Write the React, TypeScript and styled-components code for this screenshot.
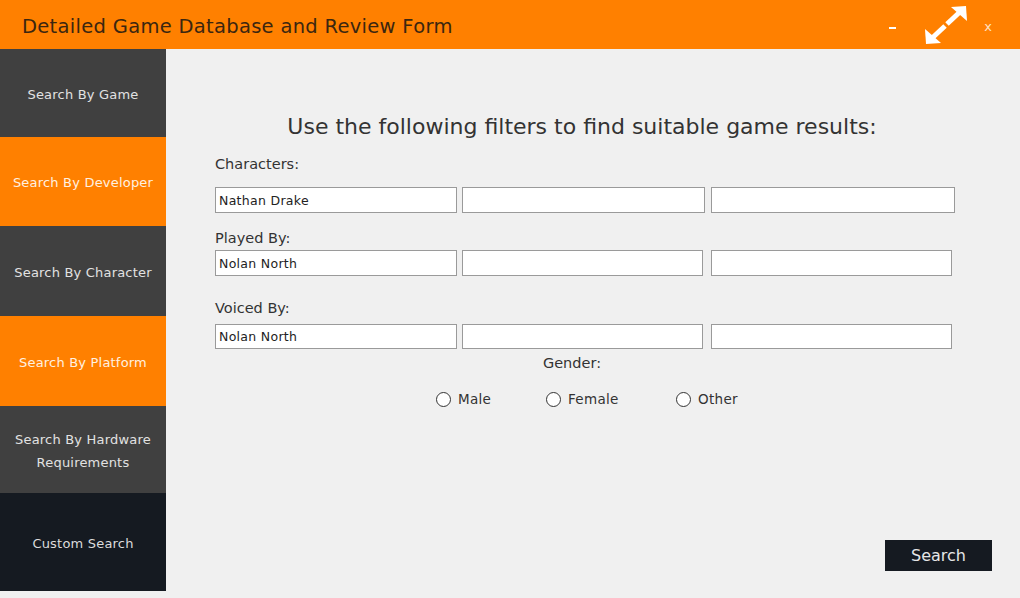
import React from 'react';
import styled, { createGlobalStyle } from 'styled-components';

const Global = createGlobalStyle`
  html, body { margin: 0; padding: 0; }
  body {
    background: #f0f0f0;
    font-family: "DejaVu Sans", "Liberation Sans", sans-serif;
  }
`;

const Window = styled.div`
  width: 1020px;
  height: 598px;
  display: flex;
  flex-direction: column;
  background: #f0f0f0;
  overflow: hidden;
`;

const TitleBar = styled.header`
  height: 49px;
  flex: none;
  background: #ff8000;
  display: flex;
  align-items: center;
  padding-left: 22px;
`;

const Title = styled.h1`
  flex: 1;
  margin: 3px 0 0 0;
  font-weight: normal;
  font-size: 19.5px;
  color: #3b2610;
  letter-spacing: 0.3px;
`;

const Controls = styled.div`
  display: flex;
  align-items: center;
  height: 100%;
`;

const Minimize = styled.span`
  width: 7px;
  height: 2px;
  background: #ffffff;
  margin-top: 6px;
  margin-right: 27px;
`;

const CloseX = styled.span`
  color: #ffe2c4;
  font-size: 13px;
  margin-left: 15px;
  margin-right: 28px;
  margin-top: 4px;
`;

const Body = styled.div`
  flex: 1;
  display: flex;
  min-height: 0;
`;

const Sidebar = styled.nav`
  width: 166px;
  flex: none;
  display: flex;
  flex-direction: column;
`;

const tones = {
  gray: { bg: '#404040', fg: '#e2e2e2' },
  orange: { bg: '#ff8000', fg: '#fff1e0' },
  navy: { bg: '#151a21', fg: '#dcdcdc' },
};

const NavItem = styled.div<{ $tone: keyof typeof tones; $h: number }>`
  height: ${(p) => p.$h}px;
  background: ${(p) => tones[p.$tone].bg};
  color: ${(p) => tones[p.$tone].fg};
  display: flex;
  align-items: center;
  justify-content: center;
  text-align: center;
  font-size: 13px;
  letter-spacing: 0.2px;
  line-height: 23px;
  padding: 2px 0 0;
  box-sizing: border-box;
  white-space: nowrap;
`;

const Content = styled.main`
  flex: 1;
  display: flex;
  flex-direction: column;
`;

const Form = styled.section`
  margin-left: 49px;
  width: 740px;
  padding-top: 64px;
  display: flex;
  flex-direction: column;
`;

const Heading = styled.h2`
  margin: 0;
  font-weight: normal;
  font-size: 22px;
  line-height: 28px;
  color: #333333;
  text-align: center;
  padding-right: 6px;
`;

const Label = styled.div<{ $mt: number; $center?: boolean }>`
  margin-top: ${(p) => p.$mt}px;
  font-size: 14.5px;
  line-height: 18px;
  color: #333333;
  text-align: ${(p) => (p.$center ? 'center' : 'left')};
  padding-right: ${(p) => (p.$center ? 26 : 0)}px;
`;

const FieldRow = styled.div<{ $mt: number }>`
  margin-top: ${(p) => p.$mt}px;
  display: flex;
`;

const Field = styled.div<{ $w: number; $h: number; $gap?: number }>`
  width: ${(p) => p.$w}px;
  height: ${(p) => p.$h}px;
  margin-left: ${(p) => p.$gap ?? 0}px;
  box-sizing: border-box;
  background: #ffffff;
  border: 1px solid #9a9a9a;
  font-size: 12.5px;
  letter-spacing: 0.3px;
  color: #222222;
  display: flex;
  align-items: center;
  padding-left: 3px;
`;

const RadioRow = styled.div`
  margin-top: 18px;
  display: grid;
  grid-template-columns: 110px 130px auto;
  padding-left: 221px;
  height: 18px;
`;

const RadioOption = styled.label`
  display: flex;
  align-items: center;
  gap: 7px;
  font-size: 13.5px;
  letter-spacing: 0.3px;
  color: #333333;
`;

const RadioCircle = styled.span`
  width: 15px;
  height: 15px;
  box-sizing: border-box;
  border-radius: 50%;
  border: 1px solid #333333;
  background: #ffffff;
`;

const Footer = styled.div`
  margin-top: auto;
  display: flex;
  justify-content: flex-end;
  padding: 0 28px 27px 0;
`;

const SearchButton = styled.button`
  width: 107px;
  height: 31px;
  border: none;
  background: #151a21;
  color: #e6e6e6;
  font-family: inherit;
  font-size: 16px;
  padding: 0;
`;

const ExpandIcon = () => (
  <svg width="46" height="44" viewBox="0 0 46 44">
    <g stroke="#ffffff" strokeWidth="5" fill="none" strokeLinecap="butt" strokeLinejoin="miter">
      <line x1="24" y1="21" x2="39" y2="7" />
      <line x1="22" y1="23" x2="7" y2="37" />
    </g>
    <polygon points="43,3 44,18 28,4" fill="#ffffff" />
    <polygon points="3,41 2,26 18,40" fill="#ffffff" />
  </svg>
);

const navItems: { label: React.ReactNode; tone: keyof typeof tones; h: number }[] = [
  { label: 'Search By Game', tone: 'gray', h: 88 },
  { label: 'Search By Developer', tone: 'orange', h: 89 },
  { label: 'Search By Character', tone: 'gray', h: 90 },
  { label: 'Search By Platform', tone: 'orange', h: 90 },
  { label: <>Search By Hardware<br />Requirements</>, tone: 'gray', h: 87 },
  { label: 'Custom Search', tone: 'navy', h: 98 },
];

export default function App() {
  return (
    <>
      <Global />
      <Window>
        <TitleBar>
          <Title>Detailed Game Database and Review Form</Title>
          <Controls>
            <Minimize />
            <ExpandIcon />
            <CloseX>x</CloseX>
          </Controls>
        </TitleBar>
        <Body>
          <Sidebar>
            {navItems.map((n, i) => (
              <NavItem key={i} $tone={n.tone} $h={n.h}>
                <span>{n.label}</span>
              </NavItem>
            ))}
          </Sidebar>
          <Content>
            <Form>
              <Heading>Use the following filters to find suitable game results:</Heading>
              <Label $mt={14}>Characters:</Label>
              <FieldRow $mt={14}>
                <Field $w={242} $h={26}>Nathan Drake</Field>
                <Field $w={243} $h={26} $gap={5} />
                <Field $w={244} $h={26} $gap={6} />
              </FieldRow>
              <Label $mt={16}>Played By:</Label>
              <FieldRow $mt={3}>
                <Field $w={242} $h={26}>Nolan North</Field>
                <Field $w={241} $h={26} $gap={5} />
                <Field $w={241} $h={26} $gap={8} />
              </FieldRow>
              <Label $mt={23}>Voiced By:</Label>
              <FieldRow $mt={7}>
                <Field $w={242} $h={25}>Nolan North</Field>
                <Field $w={241} $h={25} $gap={5} />
                <Field $w={241} $h={25} $gap={8} />
              </FieldRow>
              <Label $mt={5} $center>Gender:</Label>
              <RadioRow>
                <RadioOption><RadioCircle />Male</RadioOption>
                <RadioOption><RadioCircle />Female</RadioOption>
                <RadioOption><RadioCircle />Other</RadioOption>
              </RadioRow>
            </Form>
            <Footer>
              <SearchButton>Search</SearchButton>
            </Footer>
          </Content>
        </Body>
      </Window>
    </>
  );
}
